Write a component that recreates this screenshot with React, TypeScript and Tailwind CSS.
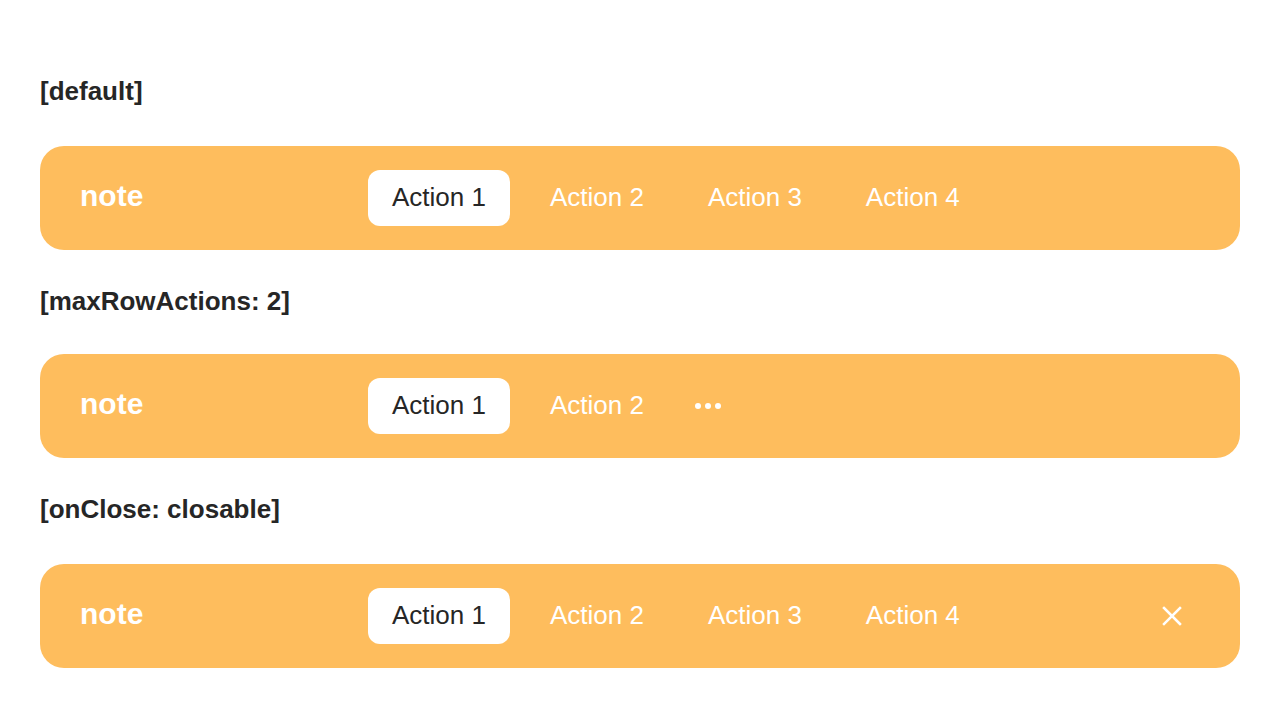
import React from "react";

const font = { fontFamily: '"Liberation Sans", Arial, sans-serif' };

function Banner({ actions, more, closable }: { actions: string[]; more?: boolean; closable?: boolean }) {
  return (
    <div className="flex h-[104px] items-center rounded-[24px] bg-[#febd5d] px-10">
      <div className="w-[288px] pb-[4px] text-[30px] font-bold leading-none text-white">note</div>
      <div className="flex flex-1 items-center gap-4">
        {actions.map((a, i) => (
          <div
            key={a}
            className={
              i === 0
                ? "flex h-14 items-center rounded-xl bg-white px-6 pb-[2px] text-[26px] text-[#262626]"
                : "flex h-14 items-center rounded-xl px-6 pb-[2px] text-[26px] text-white"
            }
          >
            {a}
          </div>
        ))}
        {more && (
          <div className="flex h-14 items-center gap-1 pl-[11px] pr-[11px]">
            <span className="h-[6px] w-[6px] rounded-full bg-white" />
            <span className="h-[6px] w-[6px] rounded-full bg-white" />
            <span className="h-[6px] w-[6px] rounded-full bg-white" />
          </div>
        )}
      </div>
      {closable && (
        <div className="flex h-14 w-14 items-center justify-center">
          <svg width="22" height="22" viewBox="0 0 22 22" fill="none">
            <path d="M3 3L19 19M19 3L3 19" stroke="white" strokeWidth="2.5" strokeLinecap="square" />
          </svg>
        </div>
      )}
    </div>
  );
}

export default function App() {
  const all = ["Action 1", "Action 2", "Action 3", "Action 4"];
  return (
    <div className="min-h-[708px] bg-white px-10 pt-[75px]" style={font}>
      <div className="mb-[39px] text-[26px] font-bold leading-8 text-[#262626]">[default]</div>
      <Banner actions={all} />
      <div className="mb-[37px] mt-[35px] text-[26px] font-bold leading-8 text-[#262626]">[maxRowActions: 2]</div>
      <Banner actions={["Action 1", "Action 2"]} more />
      <div className="mb-[39px] mt-[35px] text-[26px] font-bold leading-8 text-[#262626]">[onClose: closable]</div>
      <Banner actions={all} closable />
    </div>
  );
}
